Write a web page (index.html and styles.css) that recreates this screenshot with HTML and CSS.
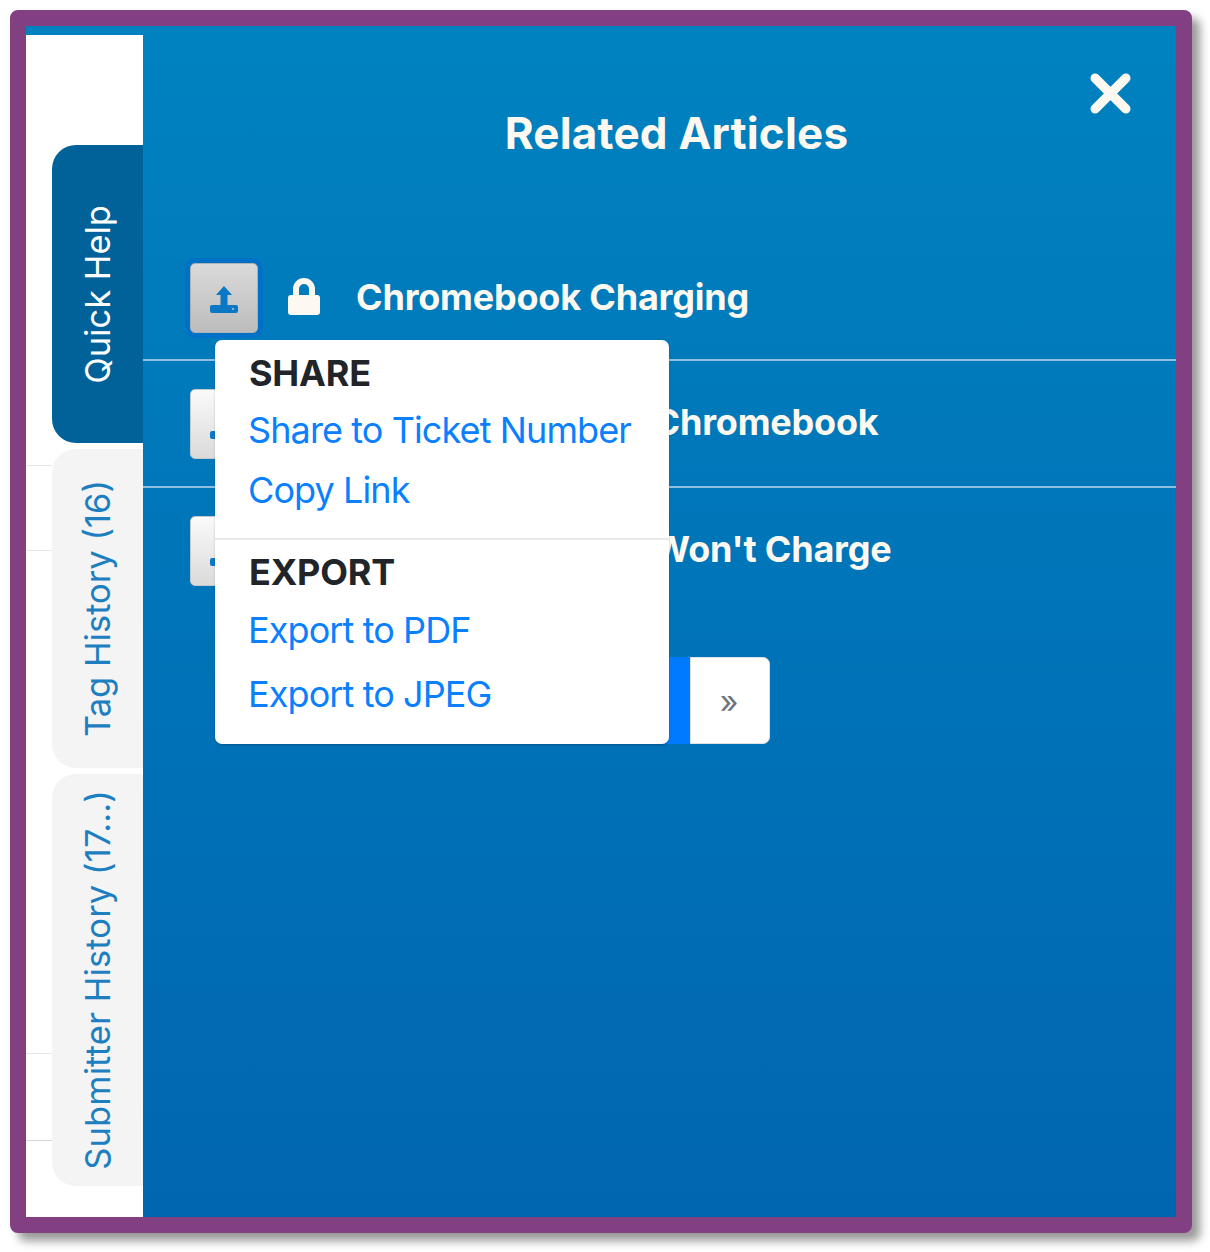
FILE: index.html
```html
<!DOCTYPE html>
<html lang="en">
<head>
  <meta charset="UTF-8">
  <title>Related Articles</title>
  <link rel="stylesheet" href="styles.css">
</head>
<body>
  <div class="frame">
    <div class="side">
      <div class="tab tab-active"><span>Quick Help</span></div>
      <div class="tab tab-tag"><span>Tag History (16)</span></div>
      <div class="tab tab-submitter"><span>Submitter History (17...)</span></div>
    </div>

    <div class="panel">
      <svg class="close" viewBox="0 0 40 40">
        <path d="M5 5 L35 35 M35 5 L5 35" />
      </svg>
      <h1 class="title">Related Articles</h1>

      <div class="articles">
        <div class="article">
          <button class="share share-open">
            <svg class="upload" viewBox="0 0 28 27">
              <path d="M14 0 L22 9 H17.5 V20 H10.5 V9 H6 Z" />
              <path d="M2 19 H26 Q28 19 28 21 V25 Q28 27 26 27 H2 Q0 27 0 25 V21 Q0 19 2 19 Z M23 22 A1 1 0 1 0 23 24 A1 1 0 1 0 23 22 Z" fill-rule="evenodd" />
            </svg>
          </button>
          <svg class="lock" viewBox="0 0 32 37">
            <path d="M5 17 V11 A11 11 0 0 1 27 11 V17 H29 Q32 17 32 20 V34 Q32 37 29 37 H3 Q0 37 0 34 V20 Q0 17 3 17 Z M11 17 H21 V11 A5 5 0 0 0 11 11 Z" fill-rule="evenodd" />
          </svg>
          <span class="article-name">Chromebook Charging</span>
        </div>
        <div class="article">
          <button class="share">
            <svg class="upload" viewBox="0 0 28 27">
              <path d="M14 0 L22 9 H17.5 V20 H10.5 V9 H6 Z" />
              <path d="M2 19 H26 Q28 19 28 21 V25 Q28 27 26 27 H2 Q0 27 0 25 V21 Q0 19 2 19 Z M23 22 A1 1 0 1 0 23 24 A1 1 0 1 0 23 22 Z" fill-rule="evenodd" />
            </svg>
          </button>
          <svg class="lock" viewBox="0 0 32 37">
            <path d="M5 17 V11 A11 11 0 0 1 27 11 V17 H29 Q32 17 32 20 V34 Q32 37 29 37 H3 Q0 37 0 34 V20 Q0 17 3 17 Z M11 17 H21 V11 A5 5 0 0 0 11 11 Z" fill-rule="evenodd" />
          </svg>
          <span class="article-name">Charging In Your Chromebook</span>
        </div>
        <div class="article">
          <button class="share">
            <svg class="upload" viewBox="0 0 28 27">
              <path d="M14 0 L22 9 H17.5 V20 H10.5 V9 H6 Z" />
              <path d="M2 19 H26 Q28 19 28 21 V25 Q28 27 26 27 H2 Q0 27 0 25 V21 Q0 19 2 19 Z M23 22 A1 1 0 1 0 23 24 A1 1 0 1 0 23 22 Z" fill-rule="evenodd" />
            </svg>
          </button>
          <svg class="lock" viewBox="0 0 32 37">
            <path d="M5 17 V11 A11 11 0 0 1 27 11 V17 H29 Q32 17 32 20 V34 Q32 37 29 37 H3 Q0 37 0 34 V20 Q0 17 3 17 Z M11 17 H21 V11 A5 5 0 0 0 11 11 Z" fill-rule="evenodd" />
          </svg>
          <span class="article-name">My Chromebook Won't Charge</span>
        </div>
      </div>

      <div class="pager">
        <span class="page page-current">1</span>
        <span class="page page-next">»</span>
      </div>

      <div class="menu">
        <div class="menu-head">SHARE</div>
        <a class="menu-link menu-link-first" href="#">Share to Ticket Number</a>
        <a class="menu-link" href="#">Copy Link</a>
        <div class="menu-line"></div>
        <div class="menu-head">EXPORT</div>
        <a class="menu-link menu-link-pdf" href="#">Export to PDF</a>
        <a class="menu-link menu-link-jpeg" href="#">Export to JPEG</a>
      </div>
    </div>
  </div>
</body>
</html>
```

FILE: styles.css
```css
html, body {
  margin: 0;
  padding: 0;
  background: #fff;
}
body {
  font-family: Inter, "Liberation Sans", Arial, sans-serif;
  padding: 10px 18px 19px 10px;
  height: 1223px;
}
.frame {
  display: flex;
  height: 1223px;
  box-sizing: border-box;
  border: 16px solid #823f82;
  border-radius: 8px;
  box-shadow: 8px 8px 10px rgba(0, 0, 0, 0.4);
  background: #0082c0;
}

/* left tabs */
.side {
  box-sizing: border-box;
  width: 117px;
  margin-top: 9px;
  padding: 110px 0 0 26px;
  display: flex;
  flex-direction: column;
  gap: 6px;
  background-color: #fff;
  background-image:
    linear-gradient(#e6e6e6, #e6e6e6),
    linear-gradient(#e6e6e6, #e6e6e6),
    linear-gradient(#e6e6e6, #e6e6e6),
    linear-gradient(#d8d8d8, #d8d8d8);
  background-repeat: no-repeat;
  background-size: 26px 1px;
  background-position: 0 430px, 0 515px, 0 1018px, 0 1105px;
}
.tab {
  flex: none;
  display: flex;
  align-items: center;
  justify-content: center;
  background: #f4f4f4;
  color: #1d7fc0;
  font-size: 34.5px;
  border-radius: 24px 0 0 24px;
  height: 319px;
}
.tab span {
  writing-mode: vertical-rl;
  transform: rotate(180deg);
  white-space: nowrap;
}
.tab-active {
  height: 298px;
  background: #006298;
  color: #fff;
}
.tab-submitter {
  height: 412px;
  letter-spacing: 0.1px;
}

/* main panel */
.panel {
  flex: 1;
  position: relative;
  background: linear-gradient(#0082c0, #0066b0);
  color: #fdf9f0;
}
.close {
  position: absolute;
  top: 47px;
  right: 45px;
  width: 41px;
  height: 41px;
  fill: none;
  stroke: #fdf9f0;
  stroke-width: 9;
  stroke-linecap: round;
}
.title {
  margin: 0;
  padding: 82px 0 0 34px;
  text-align: center;
  font-size: 44px;
  line-height: 50px;
  font-weight: 700;
  letter-spacing: 0.2px;
}
.articles {
  margin-top: 76px;
}
.article {
  box-sizing: border-box;
  height: 127px;
  padding-left: 47px;
  display: flex;
  align-items: center;
  border-bottom: 2px solid #8fbfdf;
}
.article:last-child {
  height: 125px;
  border-bottom: 0;
}
.article + .article .article-name {
  margin-top: -3px;
}
.share {
  flex: none;
  width: 68px;
  height: 70px;
  padding: 0;
  display: flex;
  align-items: center;
  justify-content: center;
  border: 1px solid #c8c8c8;
  border-radius: 5px;
  background: linear-gradient(#fafafa, #dadada);
}
.share-open {
  margin-top: 2px;
  background: linear-gradient(#dadada, #bcbcbc);
  border-color: #b0b0b0;
  box-shadow: 0 0 0 5px #0071c6;
}
.upload {
  width: 28px;
  height: 27px;
  margin-top: 4px;
  fill: #0a78c4;
}
.lock {
  flex: none;
  width: 32px;
  height: 37px;
  margin-left: 30px;
  fill: #fdf9f0;
}
.article-name {
  margin-left: 36px;
  font-size: 36px;
  font-weight: 700;
  letter-spacing: -0.2px;
  white-space: nowrap;
}
.pager {
  display: flex;
  justify-content: flex-end;
  width: 627px;
  margin-top: 44px;
}
.page {
  box-sizing: border-box;
  height: 87px;
  display: flex;
  align-items: center;
  justify-content: center;
  font-size: 32px;
}
.page-current {
  width: 60px;
  background: #007bff;
  color: #fff;
}
.page-next {
  width: 80px;
  padding: 2px 2px 0 0;
  background: #fff;
  color: #6c757d;
  border-radius: 0 7px 7px 0;
  border: 1px solid #dee2e6;
}

/* share popup */
.menu {
  position: absolute;
  top: 314px;
  left: 72px;
  width: 454px;
  height: 404px;
  box-sizing: border-box;
  padding-top: 10px;
  background: #fff;
  border-radius: 7px;
  box-shadow: 0 1px 2px rgba(0, 0, 0, 0.25);
}
.menu-head {
  padding-left: 34px;
  font-size: 36px;
  line-height: 46px;
  font-weight: 700;
  letter-spacing: -0.2px;
  color: #212529;
}
.menu-link {
  display: block;
  padding-left: 33px;
  margin-top: 14px;
  font-size: 36px;
  line-height: 46px;
  color: #0a80ff;
  text-decoration: none;
  letter-spacing: -0.9px;
}
.menu-link-first {
  margin-top: 11px;
}
.menu-link-pdf {
  margin-top: 12px;
}
.menu-link-jpeg {
  margin-top: 18px;
}
.menu-line {
  height: 2px;
  margin: 25px 0 9px;
  background: #e9e9e9;
}
```
